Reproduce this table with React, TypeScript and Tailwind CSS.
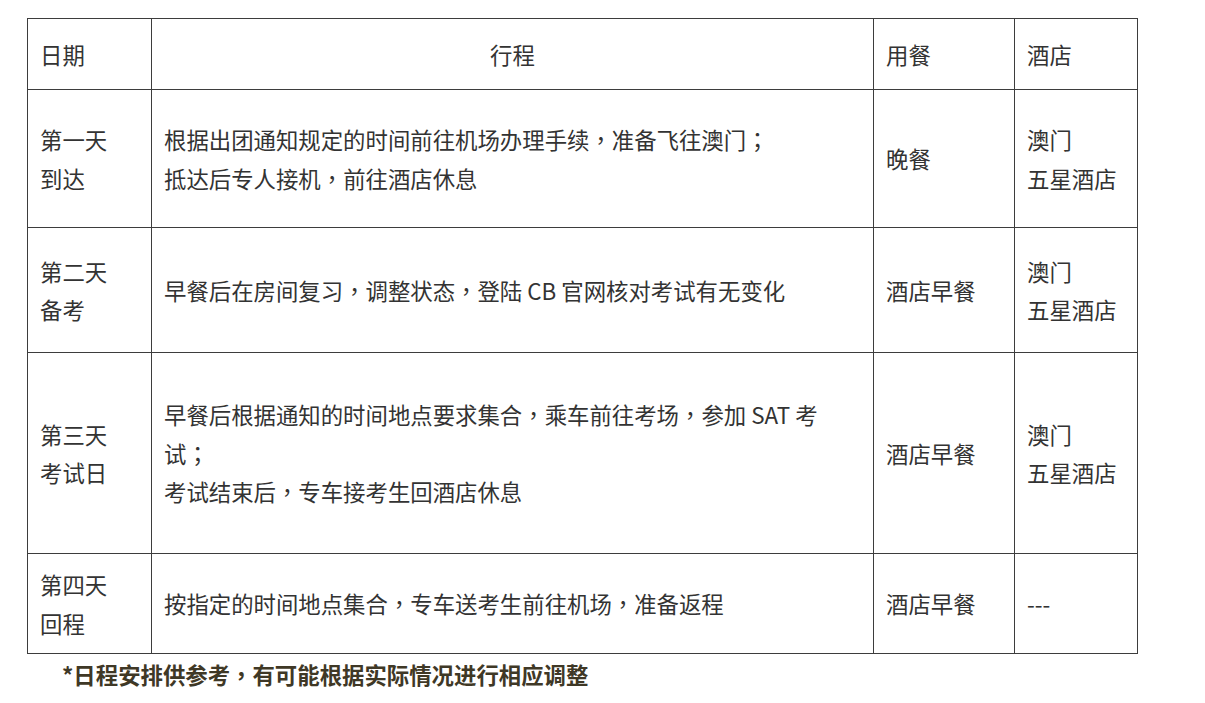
import React from "react";

const rows = [
  { day: ["第一天", "到达"], plan: ["根据出团通知规定的时间前往机场办理手续，准备飞往澳门；", "抵达后专人接机，前往酒店休息"], meal: "晚餐", hotel: ["澳门", "五星酒店"], h: "h-[138px]" },
  { day: ["第二天", "备考"], plan: ["早餐后在房间复习，调整状态，登陆 CB 官网核对考试有无变化"], meal: "酒店早餐", hotel: ["澳门", "五星酒店"], h: "h-[125px]" },
  { day: ["第三天", "考试日"], plan: ["早餐后根据通知的时间地点要求集合，乘车前往考场，参加 SAT 考试；", "考试结束后，专车接考生回酒店休息"], meal: "酒店早餐", hotel: ["澳门", "五星酒店"], h: "h-[201px]" },
  { day: ["第四天", "回程"], plan: ["按指定的时间地点集合，专车送考生前往机场，准备返程"], meal: "酒店早餐", hotel: ["---"], h: "h-[100px]" },
];

function P({ t }: { t: string }) {
  const parts = t.split(/([，；])/);
  return (
    <>
      {parts.map((p, i) =>
        p === "，" || p === "；" ? (
          <span key={i} style={{ fontFamily: '"Noto Sans CJK TC", sans-serif' }}>
            {p}
          </span>
        ) : (
          <React.Fragment key={i}>{p}</React.Fragment>
        )
      )}
    </>
  );
}

export default function App() {
  const td = "border border-[#3d3d3d] align-middle px-[12px] leading-[38.5px]";
  return (
    <div
      className="bg-white w-[1205px] h-[703px] text-[#333] text-[22.4px]"
      style={{ fontFamily: '"Noto Sans CJK SC", "Noto Sans", sans-serif' }}
    >
      <div className="pt-[18px] pl-[27px]">
        <table className="border-collapse table-fixed w-[1110px]">
          <colgroup>
            <col className="w-[124px]" />
            <col className="w-[722px]" />
            <col className="w-[141px]" />
            <col className="w-[123px]" />
          </colgroup>
          <tbody>
            <tr className="h-[71px]">
              <td className={td}>日期</td>
              <td className={td + " text-center"}>行程</td>
              <td className={td}>用餐</td>
              <td className={td}>酒店</td>
            </tr>
            {rows.map((r, i) => (
              <tr key={i} className={r.h}>
                <td className={td}>
                  {r.day.map((d, j) => (
                    <div key={j}>{d}</div>
                  ))}
                </td>
                <td className={td}>
                  {r.plan.map((p, j) => (
                    <div key={j}>
                      <P t={p} />
                    </div>
                  ))}
                </td>
                <td className={td}>{r.meal}</td>
                <td className={td}>
                  {r.hotel.map((d, j) => (
                    <div key={j}>{d}</div>
                  ))}
                </td>
              </tr>
            ))}
          </tbody>
        </table>
        <div className="pl-[35px] pt-[1px] leading-[38px] text-[22.4px] font-bold text-[#3f3826]">
          <P t="*日程安排供参考，有可能根据实际情况进行相应调整" />
        </div>
      </div>
    </div>
  );
}
